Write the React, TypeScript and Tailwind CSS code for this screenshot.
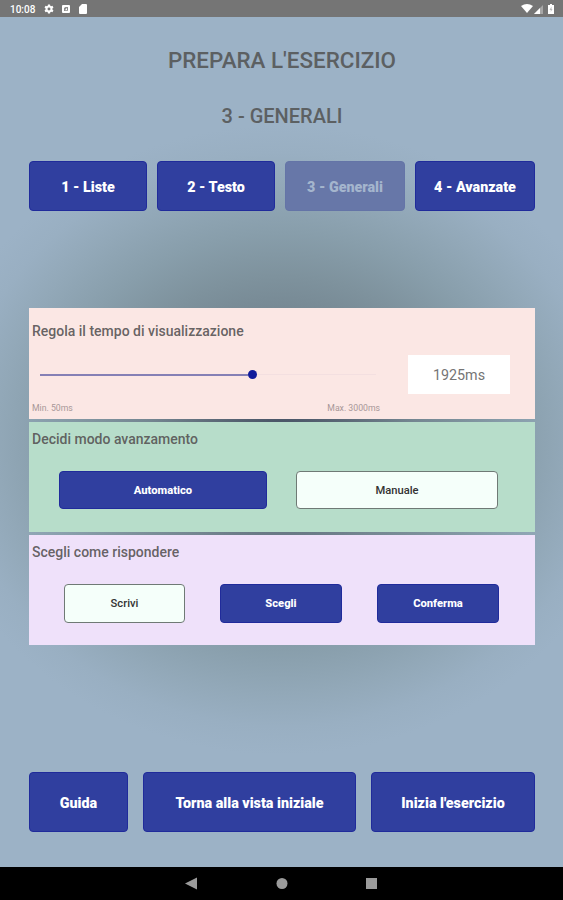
import type { ReactNode } from "react";
import clsx from "clsx";

type ButtonProps = {
  children: ReactNode;
  className?: string;
  variant?: "primary" | "light" | "disabled";
};

const variants = {
  primary: "bg-[#303f9f] border-[#202b9b] text-white",
  light: "bg-[#f5fffa] border-[#6f7a75] text-[#333333]",
  disabled: "bg-[#6777a8] border-[#6474a7] text-[#a4b5cd]",
};

const Button = ({ children, className, variant = "primary" }: ButtonProps) => (
  <button
    disabled={variant === "disabled"}
    className={clsx("flex items-center justify-center rounded-[4px] border whitespace-nowrap", variants[variant], className)}
  >
    {children}
  </button>
);

const StatusBar = () => (
  <header className="flex h-[17px] items-center bg-[#757575] pl-[10px] pr-[9px] text-white">
    <span className="w-[34px] pt-px text-[10px] leading-[17px] font-medium">10:08</span>
    <svg className="h-[10px] w-[10px]" viewBox="0 0 24 24" fill="currentColor">
      <path fillRule="evenodd" d="M9.5 1h5l.6 3.2 2 1.2 3.1-1.1 2.5 4.3-2.5 2.2v2.4l2.5 2.2-2.5 4.3-3.1-1.1-2 1.2-.6 3.2h-5l-.6-3.2-2-1.2-3.1 1.1-2.5-4.3 2.5-2.2v-2.4L1.3 8.6l2.5-4.3 3.1 1.1 2-1.2zM12 8.5a3.5 3.5 0 1 0 0 7 3.5 3.5 0 0 0 0-7z" />
    </svg>
    <svg className="ml-[8px] h-[8px] w-[8px]" viewBox="0 0 16 16">
      <rect width="16" height="16" rx="2" fill="currentColor" />
      <path d="M4 12V6l3-2h5v7l-2 1z" fill="#8b8b8b" />
      <path d="M6 10.5l4-5v5z" fill="white" />
    </svg>
    <svg className="ml-[9px] h-[10px] w-[8px]" viewBox="0 0 16 20" fill="currentColor">
      <path d="M6 0h8a2 2 0 0 1 2 2v16a2 2 0 0 1-2 2H2a2 2 0 0 1-2-2V6z" />
    </svg>
    <div className="ml-auto flex items-center">
      <svg className="h-[9px] w-[12px]" viewBox="0 0 24 18" fill="currentColor">
        <path d="M0 4Q12-4 24 4L12 18z" />
      </svg>
      <svg className="ml-[1px] mt-[1px] h-[9px] w-[9px]" viewBox="0 0 18 18">
        <path d="M0 18L18 0v18z" fill="#a6a6a6" />
        <path d="M0 18L12 6v12z" fill="white" />
      </svg>
      <svg className="ml-[5px] h-[10px] w-[6px]" viewBox="0 0 12 20">
        <path d="M4 0h4v2h4v18H0V2h4z" fill="white" />
        <path d="M7 5l-4 7h2.5v4L9 10H7z" fill="#bbbbbb" />
      </svg>
    </div>
  </header>
);

const NavBar = () => (
  <nav className="flex h-[33px] items-center justify-center bg-black text-[#9b9b9b]">
    <svg className="h-[13px] w-[193px]" viewBox="0 0 193 13" fill="currentColor">
      <path d="M0 6.5L12 .5v12z" />
      <circle cx="97" cy="6.5" r="5.5" />
      <rect x="181" y="1" width="11" height="11" />
    </svg>
  </nav>
);

const SectionTitle = ({ children }: { children: ReactNode }) => (
  <h3 className="text-[14px] leading-[16px] font-medium text-[#555253]/90">{children}</h3>
);

const App = () => {
  return (
    <div className="flex h-[900px] w-[563px] flex-col overflow-hidden font-['Roboto',sans-serif]">
      <StatusBar />

      <main className="flex flex-1 flex-col bg-[#9cb2c6] bg-[radial-gradient(ellipse_355px_315px_at_281px_423px,#444f62_0%,#5d6a78_20%,#748691_38%,#7e929d_52%,#889eab_66%,#92a8b8_80%,#99afc2_91%,#9cb2c6_100%)] pr-[28px] pl-[29px]">
        <h1 className="mt-[30px] text-center text-[22.4px] leading-[26px] font-medium text-[#5c6062]">PREPARA L'ESERCIZIO</h1>
        <h2 className="mt-[31px] text-center text-[20px] leading-[24px] font-medium text-[#5c6062]">3 - GENERALI</h2>

        <div className="mt-[33px] flex h-[50px] gap-[10px] text-[14.3px] font-black">
          <Button className="w-[118px] pt-[3px]">1 - Liste</Button>
          <Button className="w-[118px] pt-[3px]">2 - Testo</Button>
          <Button className="w-[120px] pt-[3px]" variant="disabled">3 - Generali</Button>
          <Button className="w-[120px] pt-[3px]">4 - Avanzate</Button>
        </div>

        <div className="mt-[97px] flex flex-col gap-[3px]">
          <section className="h-[111px] bg-[#fbe7e4] pt-[15px] pl-[3px]">
            <SectionTitle>Regola il tempo di visualizzazione</SectionTitle>
            <div className="mt-[16px] flex h-[39px] items-center pl-[8px]">
              <div className="flex w-[336px] items-center">
                <div className="h-[2px] w-[208px] bg-[#8580b5]"></div>
                <div className="h-[9px] w-[9px] rounded-full bg-[#101b9b]"></div>
                <div className="h-px flex-1 bg-[#f3dfe0]"></div>
              </div>
              <div className="ml-[32px] flex h-[39px] w-[102px] items-center justify-center bg-white pt-[2px] text-[14.3px] text-[#757575]">
                1925ms
              </div>
            </div>
            <div className="mt-[9px] flex w-[348px] justify-between text-[8.7px] leading-[10px] text-[#a89798]">
              <span>Min. 50ms</span>
              <span>Max. 3000ms</span>
            </div>
          </section>

          <section className="h-[110px] bg-[#b7ddca] pt-[9px] pl-[3px]">
            <SectionTitle>Decidi modo avanzamento</SectionTitle>
            <div className="mt-[24px] flex h-[38px] gap-[29px] pl-[27px] text-[11.2px]">
              <Button className="w-[208px] pt-[3px] font-extrabold">Automatico</Button>
              <Button className="w-[202px] pt-[3px] font-medium" variant="light">Manuale</Button>
            </div>
          </section>

          <section className="h-[110px] bg-[#efe1fa] pt-[9px] pl-[3px]">
            <SectionTitle>Scegli come rispondere</SectionTitle>
            <div className="mt-[24px] flex h-[39px] gap-[35px] pl-[32px] text-[11.2px]">
              <Button className="w-[121px] pt-[2px] font-medium" variant="light">Scrivi</Button>
              <Button className="w-[122px] pt-[2px] font-extrabold">Scegli</Button>
              <Button className="w-[122px] pt-[2px] font-extrabold">Conferma</Button>
            </div>
          </section>
        </div>

        <div className="mt-[127px] flex h-[60px] gap-[15px] text-[14.3px] font-black">
          <Button className="w-[99px] pt-[3px]">Guida</Button>
          <Button className="w-[213px] pt-[3px]">Torna alla vista iniziale</Button>
          <Button className="w-[164px] pt-[3px]">Inizia l'esercizio</Button>
        </div>
      </main>

      <NavBar />
    </div>
  );
};

export default App;
